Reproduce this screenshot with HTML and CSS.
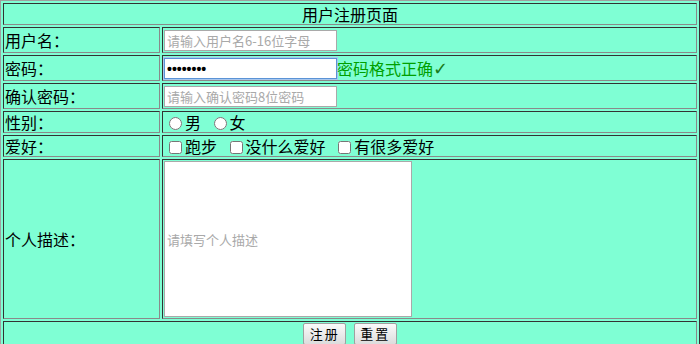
FILE: index.html
```html
<!DOCTYPE html>
<html lang="zh-CN">
<head>
    <meta charset="UTF-8">
    <title>用户注册页面</title>
    <link rel="stylesheet" href="styles.css">
</head>
<body>
    <form>
        <table class="reg-table">
            <tr>
                <td colspan="2" class="title">用户注册页面</td>
            </tr>
            <tr>
                <td class="label">用户名：</td>
                <td><input type="text" class="field" placeholder="请输入用户名6-16位字母"></td>
            </tr>
            <tr>
                <td class="label">密码：</td>
                <td><input type="password" class="field focused" value="12345678"><span class="ok">密码格式正确<span class="tick">✓</span></span></td>
            </tr>
            <tr>
                <td class="label">确认密码：</td>
                <td><input type="password" class="field" placeholder="请输入确认密码8位密码"></td>
            </tr>
            <tr>
                <td class="label">性别：</td>
                <td class="choices">
                    <label><input type="radio" name="sex">男</label>
                    <label><input type="radio" name="sex">女</label>
                </td>
            </tr>
            <tr>
                <td class="label">爱好：</td>
                <td class="choices">
                    <label><input type="checkbox">跑步</label>
                    <label><input type="checkbox">没什么爱好</label>
                    <label><input type="checkbox">有很多爱好</label>
                </td>
            </tr>
            <tr>
                <td class="label">个人描述：</td>
                <td><input type="text" class="desc" placeholder="请填写个人描述"></td>
            </tr>
            <tr>
                <td colspan="2" class="actions">
                    <button type="button">注册</button>
                    <button type="reset">重置</button>
                </td>
            </tr>
        </table>
    </form>
</body>
</html>
```

FILE: styles.css
```css
body {
    margin: 0;
    font-family: "Noto Sans CJK SC", "Liberation Sans", sans-serif;
    font-size: 16px;
}
.reg-table {
    width: 700px;
    background-color: #7fffd4;
    border: 1px solid;
    border-color: #a0a0a0 #333333 #333333 #a0a0a0;
    border-spacing: 2px;
    line-height: 18px;
}
.reg-table td {
    border: 1px solid;
    border-color: #333333 #8a8a8a #8a8a8a #333333;
    padding: 1px;
}
.title {
    text-align: center;
}
.label {
    width: 153px;
}
.field {
    width: 173px;
    height: 21px;
    box-sizing: border-box;
    margin: 0;
    padding: 1px 2px;
    border: 1px solid #a9a9a9;
    font-family: "Noto Sans CJK SC", "Liberation Sans", sans-serif;
    font-size: 13px;
    vertical-align: middle;
}
.field::placeholder,
.desc::placeholder {
    color: #a9a9a9;
}
.focused {
    border: 1px solid #5b93d6;
    outline: 1px solid #a8c8ef;
    font-family: "Liberation Sans", sans-serif;
    font-size: 14px;
    font-weight: bold;
}
.ok {
    color: #00a000;
    vertical-align: middle;
}
.tick {
    color: #1a7a1a;
    font-family: "DejaVu Sans", sans-serif;
    font-size: 18px;
    font-weight: bold;
}
.choices label {
    margin-right: 4px;
}
.choices input {
    margin: 0 3px 0 5px;
    vertical-align: -1px;
}
.desc {
    width: 248px;
    height: 156px;
    box-sizing: border-box;
    margin: 0;
    padding: 1px 2px;
    border: 1px solid #a9a9a9;
    font-family: "Noto Sans CJK SC", "Liberation Sans", sans-serif;
    font-size: 13px;
    vertical-align: middle;
}
.actions {
    text-align: center;
}
.actions button {
    width: 43px;
    height: 22px;
    margin: 0 2px;
    padding: 0;
    font-family: "Noto Sans CJK SC", "Liberation Sans", sans-serif;
    font-size: 13px;
    line-height: 18px;
    letter-spacing: 2px;
    background: linear-gradient(#fafafa, #dcdcdc);
    border: 1px solid #a0a0a0;
    border-radius: 2px;
}
```
